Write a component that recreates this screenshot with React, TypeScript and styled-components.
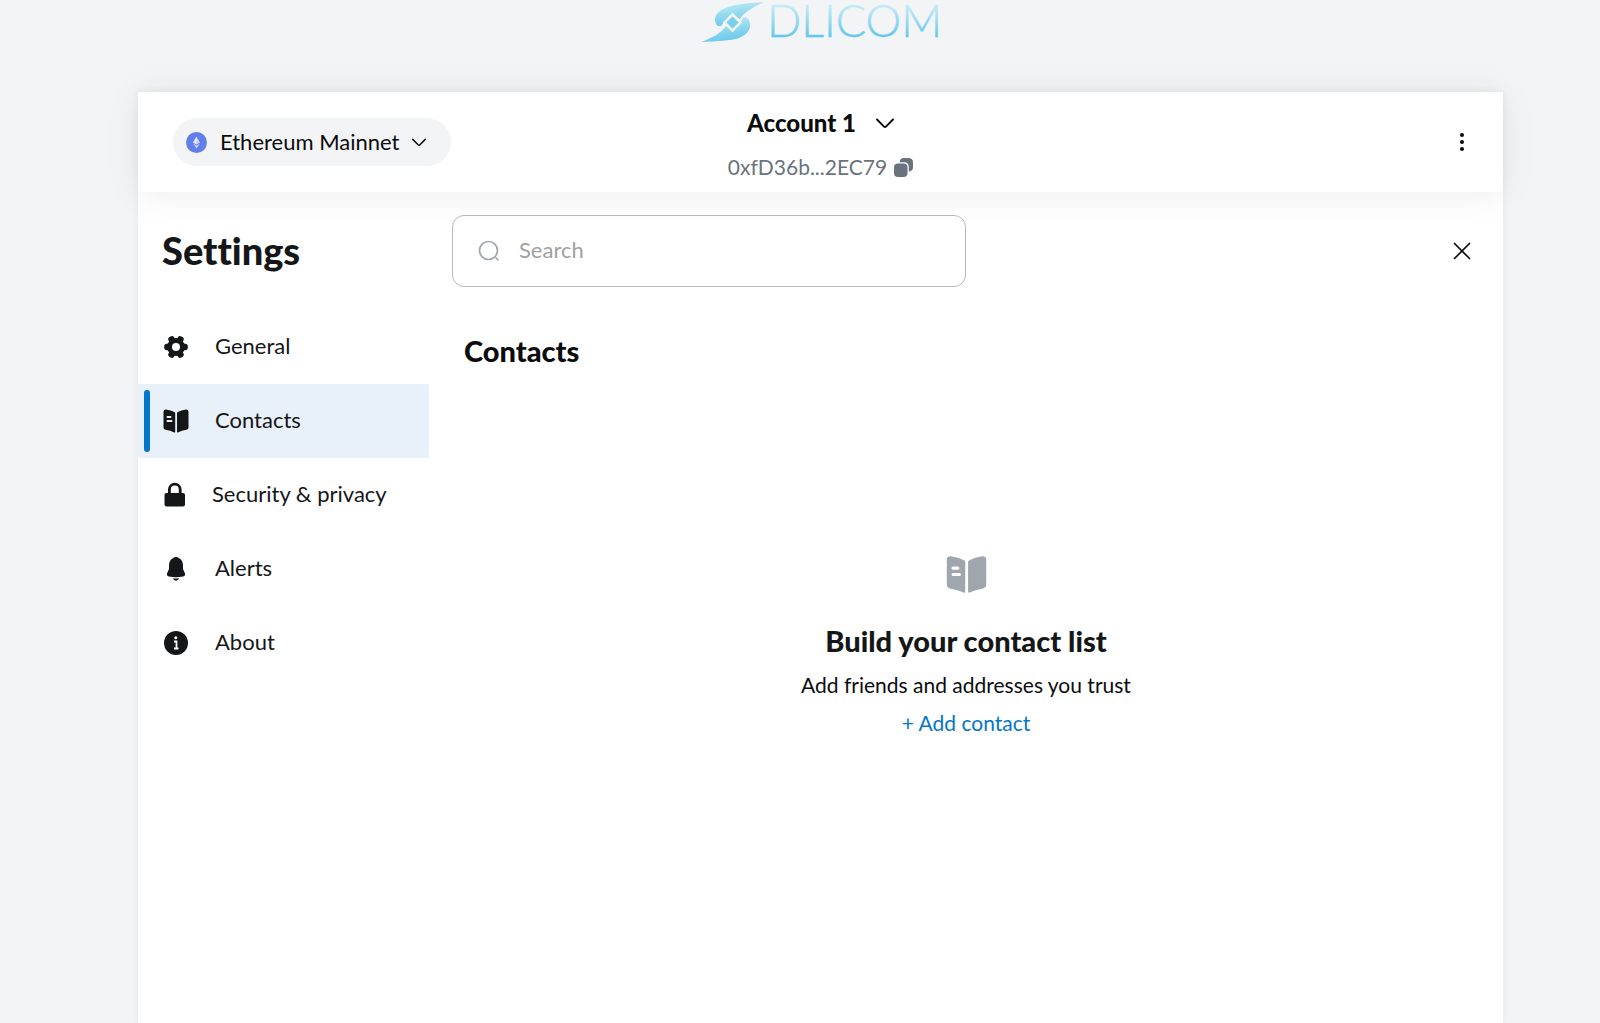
import React from 'react';
import styled, { createGlobalStyle } from 'styled-components';

const GlobalStyle = createGlobalStyle`
  *, *::before, *::after { box-sizing: border-box; }
  body {
    margin: 0;
    background: #f2f4f6;
    color: #141618;
    font-family: Lato, "Liberation Sans", sans-serif;
    font-size: 22px;
    font-variant-ligatures: none;
    line-height: 32px;
  }
  h1, h2, h3, p, ul { margin: 0; padding: 0; }
  button, input { font: inherit; color: inherit; }
  svg { display: block; flex: none; }
`;

const Page = styled.div`
  display: flex;
  flex-direction: column;
  min-height: 100vh;
  padding: 0 97px 0 138px;
`;

const Brand = styled.div`
  display: flex;
  justify-content: center;
  height: 92px;
`;

const Panel = styled.div`
  display: flex;
  flex: 1;
  flex-direction: column;
  background: #fff;
  box-shadow: 0 0 8px rgba(20, 22, 24, 0.06);
`;

const Header = styled.header`
  display: grid;
  grid-template-columns: 1fr auto 1fr;
  align-items: center;
  height: 100px;
  padding: 0 27px;
  background: #fff;
  box-shadow: 0 2px 32px rgba(20, 22, 24, 0.08);
`;

const PlainButton = styled.button`
  display: flex;
  align-items: center;
  justify-content: center;
  padding: 0;
  border: 0;
  background: none;
  cursor: pointer;
`;

const NetworkButton = styled(PlainButton)`
  justify-self: start;
  height: 48px;
  margin-left: 8px;
  padding: 0 25px 0 13px;
  border-radius: 24px;
  background: #f2f4f6;
  color: #0b0c0d;
  gap: 13px;
`;

const Account = styled.div`
  display: flex;
  flex-direction: column;
  align-items: center;
  padding-top: 6px;
  gap: 12px;
`;

const AccountButton = styled(PlainButton)`
  gap: 20px;
  color: #0b0c0d;
  font-size: 24px;
  font-weight: 900;
`;

const AddressButton = styled(PlainButton)`
  gap: 7px;
  color: #6a737d;
  font-size: 21px;
`;

const IconButton = styled(PlainButton)`
  justify-self: end;
  width: 28px;
  height: 28px;
  color: #0b0c0d;
`;

const Body = styled.div`
  display: flex;
  flex: 1;
`;

const Sidebar = styled.aside`
  flex: 0 0 291px;
`;

const Title = styled.h1`
  height: 118px;
  padding: 34px 24px 0;
  font-size: 38px;
  font-weight: 900;
  line-height: 48px;
`;

const NavItem = styled.a<{ $active?: boolean }>`
  display: flex;
  align-items: center;
  height: 74px;
  padding: 6px;
  background: ${(p) => (p.$active ? '#e8f0fa' : 'transparent')};
  color: #141618;
  text-decoration: none;

  &::before {
    content: '';
    align-self: stretch;
    width: 6px;
    margin-right: 13px;
    border-radius: 3px;
    background: ${(p) => (p.$active ? '#0376c9' : 'transparent')};
  }
`;

const NavLabel = styled.span`
  margin-left: 26px;
  padding-bottom: 2px;
`;

const Content = styled.main`
  display: flex;
  flex: 1;
  flex-direction: column;
`;

const Toolbar = styled.div`
  display: flex;
  align-items: center;
  justify-content: space-between;
  padding: 23px 27px 0 23px;
`;

const SearchField = styled.label`
  display: flex;
  align-items: center;
  width: 514px;
  height: 72px;
  padding: 0 25px;
  gap: 19px;
  border: 1px solid #b3b9bf;
  border-radius: 12px;
  color: #9fa6ae;
`;

const SearchInput = styled.input`
  flex: 1;
  min-width: 0;
  padding: 0 0 2px;
  border: 0;
  outline: 0;
  background: none;
  color: #141618;

  &::placeholder { color: #a0a0a0; opacity: 1; }
`;

const SectionTitle = styled.h2`
  padding: 46px 35px 0;
  color: #0b0c0d;
  font-size: 29px;
  font-weight: 900;
  line-height: 36px;
`;

const EmptyState = styled.section`
  display: flex;
  flex-direction: column;
  align-items: center;
  padding-top: 185px;
`;

const EmptyTitle = styled.h3`
  margin-top: 28px;
  font-size: 29px;
  font-weight: 900;
  line-height: 36px;
`;

const EmptyText = styled.p`
  margin-top: 10px;
  color: #0b0c0d;
  font-size: 21px;
`;

const AddButton = styled(PlainButton)`
  margin-top: 6px;
  color: #0376c9;
  font-size: 21px;
`;

const Logo = () => (
  <svg width="242" height="48" viewBox="0 0 242 48" role="img" aria-label="DLICOM">
    <defs>
      <linearGradient id="mark" x1="0.3" y1="0" x2="0.6" y2="1">
        <stop offset="0" stopColor="#c4edf5" />
        <stop offset="0.5" stopColor="#8fd8ee" />
        <stop offset="1" stopColor="#66c8ea" />
      </linearGradient>
      <linearGradient id="word" gradientUnits="userSpaceOnUse" x1="0" y1="4" x2="0" y2="37">
        <stop offset="0" stopColor="#c9edf6" />
        <stop offset="1" stopColor="#62c6ea" />
      </linearGradient>
    </defs>
    <path d="M64 2C50 3 36 4 28 7C16 11 13 18 16 24Q18 27 21 26L25 21L32.500 14L40 19C43 13 53 7 64 2Z" fill="url(#mark)" />
    <path d="M1 42C16 41 31 41 39 38C49 34 52 27 49 20Q47 16 43 18L40 23L32.500 31L26 26C21 33 12 38 1 42Z" fill="url(#mark)" />
    <path d="M32.500 14.500L40.500 22.500L32.500 30.500L24.500 22.500Z" fill="#78cfec" stroke="#f2f4f6" strokeWidth="2.500" />
    <text x="67" y="37" fontFamily="Lato, sans-serif" fontWeight="300" fontSize="45" fill="url(#word)" stroke="url(#word)" strokeWidth="0.500">DLICOM</text>
  </svg>
);

const EthereumIcon = () => (
  <svg width="21" height="21" viewBox="0 0 21 21" aria-hidden="true">
    <circle cx="10.500" cy="10.500" r="10.500" fill="#627eea" />
    <path d="M10.500 4.500L14 10.500L10.500 12.600L7 10.500Z" fill="#fff" fillOpacity=".65" />
    <path d="M7 11.500L10.500 13.600L14 11.500L10.500 16.500Z" fill="#fff" fillOpacity=".65" />
    <path d="M10.500 4.500V12.600L7 10.500Z" fill="#fff" fillOpacity=".5" />
  </svg>
);

const Chevron = ({ width }: { width: number }) => (
  <svg width={width} height={width / 2 + 2} viewBox="0 0 18 11" fill="none" stroke="currentColor" strokeWidth="1.900" strokeLinecap="round" strokeLinejoin="round" aria-hidden="true">
    <path d="M1 1.500L7.800 8.300Q9 9.500 10.200 8.300L17 1.500" />
  </svg>
);

const CopyIcon = () => (
  <svg width="19" height="19" viewBox="0 0 19 19" fill="currentColor" aria-hidden="true">
    <rect x="0" y="5.500" width="13.500" height="13.500" rx="4" />
    <path d="M5.500 4.300Q6 0 10 0H14.500Q19 0 19 4.500V9Q19 13.300 14.800 13.600V9Q14.800 4.300 10 4.300Z" />
  </svg>
);

const DotsIcon = () => (
  <svg width="20" height="20" viewBox="0 0 20 20" fill="currentColor" aria-hidden="true">
    <circle cx="10" cy="3" r="2" />
    <circle cx="10" cy="10" r="2" />
    <circle cx="10" cy="17" r="2" />
  </svg>
);

const CloseIcon = () => (
  <svg width="18" height="18" viewBox="0 0 18 18" stroke="currentColor" strokeWidth="1.700" strokeLinecap="round" aria-hidden="true">
    <path d="M1.500 1.500L16.500 16.500M16.500 1.500L1.500 16.500" />
  </svg>
);

const SearchIcon = () => (
  <svg width="22" height="22" viewBox="0 0 22 22" fill="none" stroke="currentColor" strokeWidth="1.700" strokeLinecap="round" aria-hidden="true">
    <circle cx="10.500" cy="10.500" r="9" />
    <path d="M18 18L20 20" />
  </svg>
);

const GearIcon = () => (
  <svg width="26" height="26" viewBox="0 0 26 26" aria-hidden="true">
    <g fill="#141618">
      <circle cx="13" cy="13" r="9" />
      {[0, 60, 120].map((angle) => (
        <rect key={angle} x="1.200" y="9.800" width="23.600" height="6.400" rx="2.600" transform={`rotate(${angle} 13 13)`} />
      ))}
    </g>
    <circle cx="13" cy="13" r="4" fill="#fff" />
  </svg>
);

const BookIcon = ({ size = 26 }: { size?: number }) => (
  <svg width={size} height={size} viewBox="0 0 26 26" fill="currentColor" aria-hidden="true">
    <path fillRule="evenodd" d="M3 1.500Q8 2.200 11.400 3.900Q12.200 4.300 12.200 5.200V23.700Q12.200 24.800 11.200 24.400Q7.500 22.700 2.500 21.800Q.5 21.400 .5 19.400V3.800Q.5 1.300 3 1.500ZM4.500 8A.9.9 0 0 0 4.500 10H7.500A.9.9 0 0 0 7.500 8ZM4.500 12A.9.9 0 0 0 4.500 14H8.500A.9.9 0 0 0 8.500 12Z" />
    <path d="M23 1.500Q18 2.200 14.800 3.900Q14 4.300 14 5.200V23.700Q14 24.800 15 24.400Q18.500 22.700 23.500 21.800Q25.500 21.400 25.500 19.400V3.800Q25.500 1.300 23 1.500Z" />
  </svg>
);

const LockIcon = () => (
  <svg width="23" height="26" viewBox="0 0 23 26" aria-hidden="true">
    <rect x="1.500" y="11" width="20.500" height="13.500" rx="2" fill="#141618" />
    <path d="M6.400 12V7.500A5.400 5.400 0 0 1 17.200 7.500V12" fill="none" stroke="#141618" strokeWidth="2.800" />
  </svg>
);

const BellIcon = () => (
  <svg width="26" height="26" viewBox="0 0 26 26" fill="#141618" aria-hidden="true">
    <path d="M13 1Q15 1 15.800 2Q20 4 20 9.500V13L22 17.500Q22.500 20 20 20.500Q13 21.800 6 20.500Q3.500 20 4 17.500L6 13V9.500Q6 4 10.200 2Q11 1 13 1Z" />
    <path d="M9.800 22.300Q13 22.900 16.200 22.300Q15.300 24.700 13 24.700Q10.700 24.700 9.800 22.300Z" />
  </svg>
);

const InfoIcon = () => (
  <svg width="26" height="26" viewBox="0 0 26 26" aria-hidden="true">
    <circle cx="13" cy="13" r="12" fill="#141618" />
    <circle cx="12.800" cy="7.800" r="1.500" fill="#fff" />
    <path d="M11 11.500H13.500V18.500M11 18.500H15.500" fill="none" stroke="#fff" strokeWidth="1.800" />
  </svg>
);

const navItems = [
  { label: 'General', icon: <GearIcon /> },
  { label: 'Contacts', icon: <BookIcon />, active: true },
  { label: 'Security & privacy', icon: <LockIcon /> },
  { label: 'Alerts', icon: <BellIcon /> },
  { label: 'About', icon: <InfoIcon /> },
];

const EmptyIcon = styled.div`
  color: #9fa6ae;
`;

export default function App() {
  return (
    <>
      <GlobalStyle />
      <Page>
        <Brand><Logo /></Brand>
        <Panel>
          <Header>
            <NetworkButton type="button">
              <EthereumIcon />
              <span>Ethereum Mainnet</span>
              <Chevron width={14} />
            </NetworkButton>
            <Account>
              <AccountButton type="button">
                <span>Account 1</span>
                <Chevron width={18} />
              </AccountButton>
              <AddressButton type="button">
                <span>0xfD36b...2EC79</span>
                <CopyIcon />
              </AddressButton>
            </Account>
            <IconButton type="button" aria-label="Account options"><DotsIcon /></IconButton>
          </Header>
          <Body>
            <Sidebar>
              <Title>Settings</Title>
              <nav>
                {navItems.map((item) => (
                  <NavItem key={item.label} href="#" $active={item.active} aria-current={item.active ? 'page' : undefined}>
                    {item.icon}
                    <NavLabel>{item.label}</NavLabel>
                  </NavItem>
                ))}
              </nav>
            </Sidebar>
            <Content>
              <Toolbar>
                <SearchField>
                  <SearchIcon />
                  <SearchInput type="text" placeholder="Search" aria-label="Search" />
                </SearchField>
                <IconButton type="button" aria-label="Close"><CloseIcon /></IconButton>
              </Toolbar>
              <SectionTitle>Contacts</SectionTitle>
              <EmptyState>
                <EmptyIcon><BookIcon size={41} /></EmptyIcon>
                <EmptyTitle>Build your contact list</EmptyTitle>
                <EmptyText>Add friends and addresses you trust</EmptyText>
                <AddButton type="button">+ Add contact</AddButton>
              </EmptyState>
            </Content>
          </Body>
        </Panel>
      </Page>
    </>
  );
}
